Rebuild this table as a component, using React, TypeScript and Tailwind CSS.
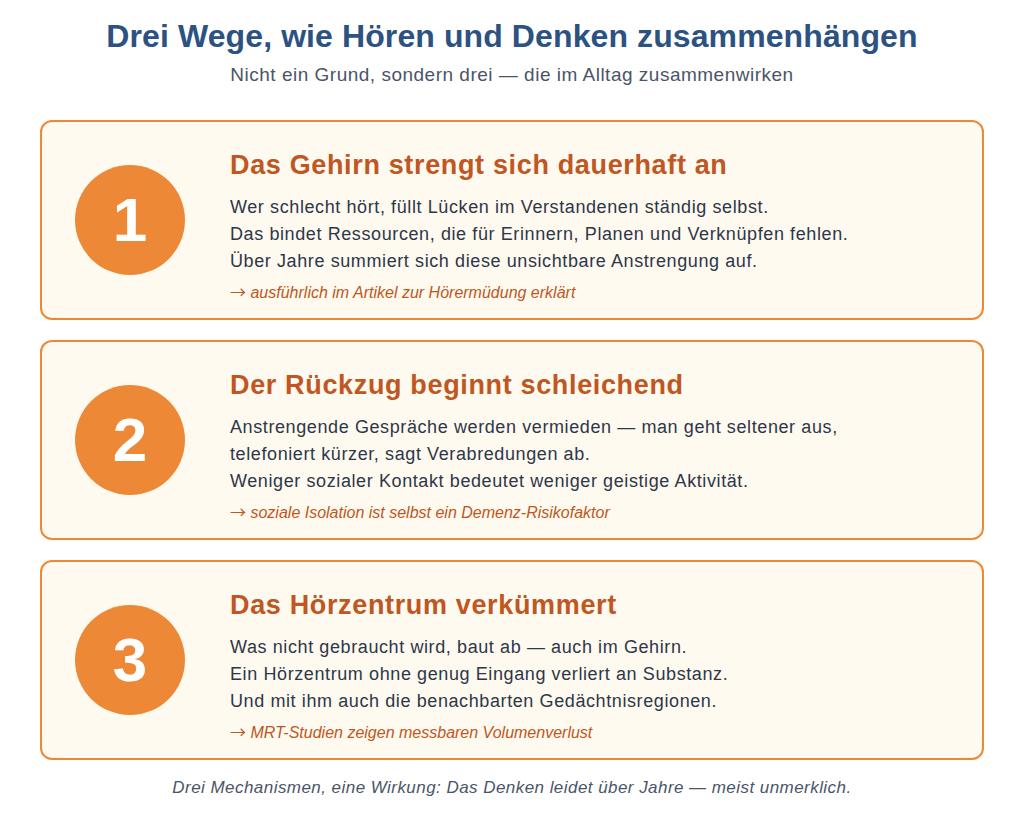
import React from 'react';

interface Mechanism {
  num: string;
  title: string;
  lines: string[];
  note: string;
}

const mechanisms: Mechanism[] = [
  {
    num: '1',
    title: 'Das Gehirn strengt sich dauerhaft an',
    lines: [
      'Wer schlecht hört, füllt Lücken im Verstandenen ständig selbst.',
      'Das bindet Ressourcen, die für Erinnern, Planen und Verknüpfen fehlen.',
      'Über Jahre summiert sich diese unsichtbare Anstrengung auf.',
    ],
    note: 'ausführlich im Artikel zur Hörermüdung erklärt',
  },
  {
    num: '2',
    title: 'Der Rückzug beginnt schleichend',
    lines: [
      'Anstrengende Gespräche werden vermieden — man geht seltener aus,',
      'telefoniert kürzer, sagt Verabredungen ab.',
      'Weniger sozialer Kontakt bedeutet weniger geistige Aktivität.',
    ],
    note: 'soziale Isolation ist selbst ein Demenz-Risikofaktor',
  },
  {
    num: '3',
    title: 'Das Hörzentrum verkümmert',
    lines: [
      'Was nicht gebraucht wird, baut ab — auch im Gehirn.',
      'Ein Hörzentrum ohne genug Eingang verliert an Substanz.',
      'Und mit ihm auch die benachbarten Gedächtnisregionen.',
    ],
    note: 'MRT-Studien zeigen messbaren Volumenverlust',
  },
];

const MechanismCard: React.FC<{ item: Mechanism }> = ({ item }) => (
  <div className="flex items-center h-[200px] rounded-xl border-2 border-[#ed8936] bg-[#fffaf0] pl-[33px]">
    <div className="flex items-center justify-center w-[110px] h-[110px] rounded-full bg-[#ed8936] text-white text-[62px] font-bold shrink-0 leading-none">
      {item.num}
    </div>
    <div className="ml-[45px] pt-[12px]">
      <h2 className="text-[27px] font-bold text-[#c05621] leading-[32px] tracking-[0.65px] mb-[13px]">{item.title}</h2>
      {item.lines.map((line) => (
        <p key={line} className="text-[18px] text-[#2d3748] leading-[27px] tracking-[0.6px]">{line}</p>
      ))}
      <p className="text-[16px] italic text-[#c05621] leading-[20px] mt-[6px]">
        <span className="not-italic font-['Noto_Sans_CJK_SC',sans-serif]">→</span> {item.note}
      </p>
    </div>
  </div>
);

export default function App() {
  return (
    <div className="w-[1024px] h-[820px] bg-white font-['Liberation_Sans',Arial,sans-serif]">
      <header className="text-center pt-[16px]">
        <h1 className="text-[32px] font-bold text-[#2c5282] leading-[40px] tracking-[0.1px]">
          Drei Wege, wie Hören und Denken zusammenhängen
        </h1>
        <p className="text-[19px] text-[#4a5568] leading-[24px] tracking-[0.5px] mt-[7px]">
          Nicht ein Grund, sondern drei — die im Alltag zusammenwirken
        </p>
      </header>
      <main className="flex flex-col gap-[20px] mx-[40px] mt-[33px]">
        {mechanisms.map((m) => (
          <MechanismCard key={m.num} item={m} />
        ))}
      </main>
      <p className="text-center text-[17px] italic text-[#4a5568] mt-[17px] leading-[22px] tracking-[0.45px]">
        Drei Mechanismen, eine Wirkung: Das Denken leidet über Jahre — meist unmerklich.
      </p>
    </div>
  );
}
